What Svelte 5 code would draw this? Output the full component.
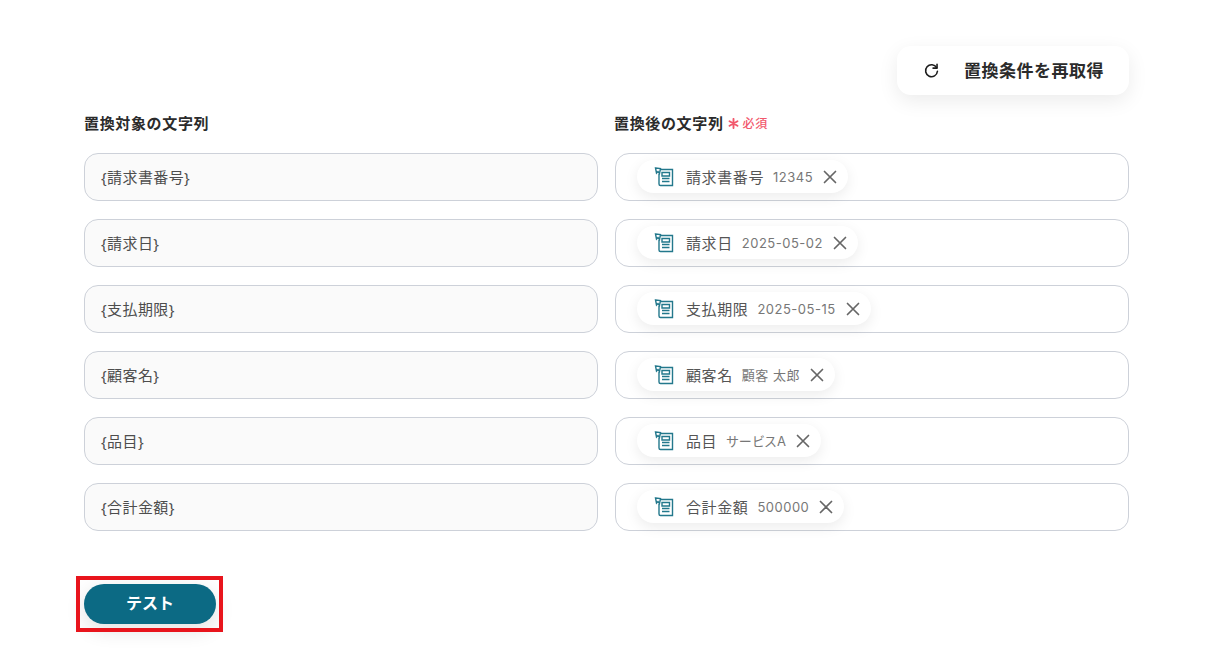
<script>
  const rows = [
    { key: '{請求書番号}', label: '請求書番号', value: '12345' },
    { key: '{請求日}', label: '請求日', value: '2025-05-02' },
    { key: '{支払期限}', label: '支払期限', value: '2025-05-15' },
    { key: '{顧客名}', label: '顧客名', value: '顧客 太郎' },
    { key: '{品目}', label: '品目', value: 'サービスA' },
    { key: '{合計金額}', label: '合計金額', value: '500000' }
  ];
</script>

<div class="page">
  <div class="toolbar">
    <button class="refresh">
      <svg viewBox="0 0 24 24" width="19" height="19" fill="none" stroke="#1c1c1c" stroke-width="2" stroke-linecap="round" stroke-linejoin="round">
        <path d="M18.5 8.5A7.5 7.5 0 1 0 19.5 13"></path>
        <path d="M19 4v5h-5"></path>
      </svg>
      <span>置換条件を再取得</span>
    </button>
  </div>

  <div class="grid">
    <div class="label">置換対象の文字列</div>
    <div class="label after">
      置換後の文字列
      <span class="req">
        <svg viewBox="0 0 10 10" width="11" height="11" stroke="#f2586c" stroke-width="1.7" stroke-linecap="round">
          <path d="M5 .8v8.4M1.4 2.9l7.2 4.2M8.6 2.9L1.4 7.1"></path>
        </svg>
        必須
      </span>
    </div>

    {#each rows as row}
      <div class="field readonly"><span class="key">{row.key}</span></div>
      <div class="field">
        <span class="chip">
          <svg class="doc" viewBox="0 0 20 20" width="20" height="20" fill="none" stroke="#23788c" stroke-width="1.4">
            <path d="M6 2.5h12.5v16H6.5A1.5 1.5 0 0 1 5 17V7"></path>
            <path d="M1.5 1l5 .5-1 5-1.5-2-1.5 1.5z"></path>
            <path d="M8 5.5h7.5v3.5H8zM8 11.5h7.5M8 14.5h7.5"></path>
          </svg>
          <span class="name">{row.label}</span>
          <span class="value">{row.value}</span>
          <svg viewBox="0 0 14 14" width="14" height="14" stroke="#666" stroke-width="1.7" stroke-linecap="round">
            <path d="M1.5 1.5l11 11M12.5 1.5l-11 11"></path>
          </svg>
        </span>
      </div>
    {/each}
  </div>

  <div class="actions">
    <button class="test">テスト</button>
    <div class="highlight"></div>
  </div>
</div>

<style>
  :global(body) {
    background: #fff;
  }

  .page {
    padding: 46px 100px 47px 84px;
    font-family: "Noto Sans", "Noto Sans CJK JP", sans-serif;
    color: #2b2b2b;
  }

  .toolbar {
    display: flex;
    justify-content: flex-end;
  }

  .refresh {
    display: flex;
    align-items: center;
    gap: 23px;
    width: 232px;
    height: 49px;
    padding: 0 0 3px 25px;
    border: none;
    border-radius: 14px;
    background: #fff;
    box-shadow: 0 6px 20px rgba(0, 0, 0, 0.08);
    font: inherit;
    font-size: 17px;
    font-weight: 700;
    letter-spacing: 0.5px;
    color: #2b2b2b;
  }

  .refresh svg {
    margin-top: 3px;
  }

  .grid {
    display: grid;
    grid-template-columns: 514px 514px;
    column-gap: 17px;
    row-gap: 18px;
    margin-top: 7px;
  }

  .label {
    font-size: 15px;
    font-weight: 700;
    letter-spacing: 0.65px;
    height: 40px;
    margin-bottom: -7px;
    display: flex;
    align-items: center;
    color: #2b2b2b;
  }

  .label.after {
    margin-left: -1px;
  }

  .req {
    display: inline-flex;
    align-items: center;
    gap: 4px;
    margin-left: 4px;
    padding-top: 2px;
    font-size: 12px;
    font-weight: 500;
    letter-spacing: 0.6px;
    color: #f2586c;
  }

  .field {
    box-sizing: border-box;
    height: 48px;
    display: flex;
    align-items: center;
    padding: 0 21px;
    border: 1px solid #cdd1d9;
    border-radius: 14px;
    background: #fff;
    font-size: 15px;
    letter-spacing: 0.6px;
    color: #4d4d4d;
  }

  .field.readonly {
    padding: 0 16px;
    background: #fafafa;
    letter-spacing: 0.4px;
  }

  .key {
    margin-top: -2px;
  }

  .chip {
    display: inline-flex;
    align-items: center;
    height: 33px;
    margin-top: -1px;
    padding: 0 11px 0 17px;
    border-radius: 17px;
    background: #fff;
    box-shadow: 0 4px 14px rgba(0, 0, 0, 0.08);
  }

  .doc {
    margin-right: 12px;
  }

  .name {
    margin-right: 9px;
    color: #555;
  }

  .value {
    font-family: Inter, "Noto Sans CJK JP", sans-serif;
    font-size: 13px;
    font-feature-settings: "palt";
    letter-spacing: 0.5px;
    color: #777;
    margin-right: 10px;
  }

  .actions {
    position: relative;
    margin-top: 53px;
  }

  .test {
    display: block;
    width: 132px;
    height: 40px;
    padding: 0 0 5px;
    border: none;
    border-radius: 20px;
    background: #0c6a84;
    color: #fff;
    font: inherit;
    font-size: 16px;
    font-weight: 700;
    box-shadow: 0 6px 20px rgba(0, 0, 0, 0.12);
  }

  .highlight {
    position: absolute;
    left: -8px;
    top: -8px;
    width: 147px;
    height: 56px;
    box-sizing: border-box;
    border: 4px solid #e8141c;
  }
</style>
